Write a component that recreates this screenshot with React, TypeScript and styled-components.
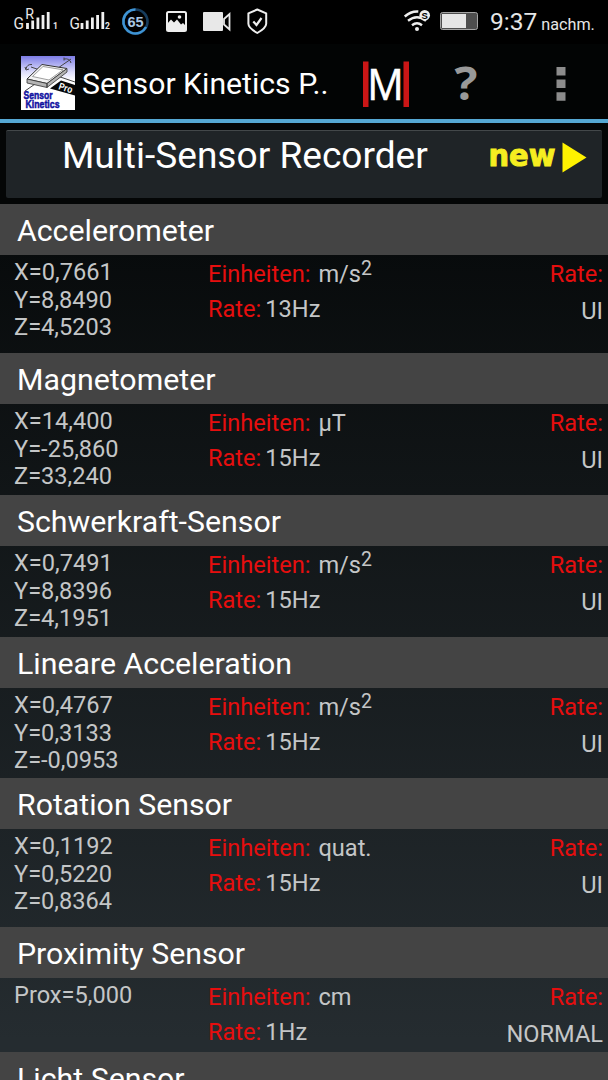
import React from 'react';
import styled, { createGlobalStyle } from 'styled-components';

const GlobalStyle = createGlobalStyle`
  * { box-sizing: border-box; }
  html, body { margin: 0; padding: 0; background: #000; }
  body { font-family: Roboto, "Liberation Sans", sans-serif; overflow: hidden; }
`;

const Screen = styled.div`
  width: 608px;
  height: 1080px;
  overflow: hidden;
  display: flex;
  flex-direction: column;
  background: linear-gradient(180deg, #000 0, #020404 120px, #080b0c 250px, #252c30 1040px);
  color: #fff;
`;

const StatusBar = styled.div`
  height: 44px;
  flex: none;
  display: flex;
  align-items: center;
  background: #000;
`;

const StatusIcons = styled.svg`
  display: block;
  flex: none;
`;

const Clock = styled.div`
  display: flex;
  align-items: baseline;
  margin-left: 10px;
  padding-top: 2px;
  color: #e6e6e6;
  font-size: 24.5px;
  line-height: 44px;
  white-space: nowrap;
`;

const Meridiem = styled.span`
  margin-left: 4px;
  font-size: 16.2px;
`;

const ActionBar = styled.div`
  height: 79px;
  flex: none;
  display: flex;
  align-items: center;
  padding: 2px 0 0 21px;
  background: #020404;
  border-bottom: 4px solid #55a8d3;
`;

const AppTitle = styled.div`
  width: 287px;
  padding: 3px 0 0 7px;
  font-size: 30.2px;
  line-height: 40px;
  white-space: nowrap;
`;

const RecorderFrame = styled.div`
  height: 81px;
  flex: none;
  padding: 7px 6px 6px;
  background: #040606;
`;

const RecorderButton = styled.div`
  height: 68px;
  display: flex;
  align-items: flex-start;
  padding-left: 56px;
  border-top: 1px solid #43484a;
  border-radius: 2px;
  background: #1f2427;
`;

const RecorderLabel = styled.div`
  width: 426px;
  padding-top: 3px;
  font-size: 37.1px;
  line-height: 44px;
  white-space: nowrap;
`;

const SectionHeader = styled.div`
  height: 51px;
  flex: none;
  padding: 2px 0 0 17px;
  background: #444;
  font-size: 30.3px;
  line-height: 50px;
  white-space: nowrap;
`;

const SectionBody = styled.div<{ $height: number }>`
  height: ${(p) => p.$height}px;
  flex: none;
  display: grid;
  grid-template-columns: 194px 1fr auto;
  padding: 4px 5px 0 14px;
  color: #c4c6c7;
  font-size: 23.6px;
  line-height: 27.6px;
  white-space: nowrap;
`;

const Readings = styled.div`
  display: flex;
  flex-direction: column;
`;

const Details = styled.div`
  display: flex;
  flex-direction: column;
  gap: 7.4px;
  padding-top: 2px;
`;

const Detail = styled.div<{ $gap: number }>`
  display: flex;
  gap: ${(p) => p.$gap}px;
  height: 27.6px;
`;

const RateColumn = styled.div`
  display: flex;
  flex-direction: column;
  align-items: flex-end;
  gap: 9px;
  padding-top: 2px;
`;

const Label = styled.span`
  color: #e60e0e;
`;

const Power = styled.sup`
  font-size: 19.5px;
  line-height: 0;
  vertical-align: 7.5px;
`;

type Sensor = {
  name: string;
  height: number;
  readings: string[];
  unit: string;
  squared?: boolean;
  hz: string;
  mode: string;
};

const sensors: Sensor[] = [
  { name: 'Accelerometer', height: 98, readings: ['X=0,7661', 'Y=8,8490', 'Z=4,5203'], unit: 'm/s', squared: true, hz: '13Hz', mode: 'UI' },
  { name: 'Magnetometer', height: 91, readings: ['X=14,400', 'Y=-25,860', 'Z=33,240'], unit: 'µT', hz: '15Hz', mode: 'UI' },
  { name: 'Schwerkraft-Sensor', height: 91, readings: ['X=0,7491', 'Y=8,8396', 'Z=4,1951'], unit: 'm/s', squared: true, hz: '15Hz', mode: 'UI' },
  { name: 'Lineare Acceleration', height: 90, readings: ['X=0,4767', 'Y=0,3133', 'Z=-0,0953'], unit: 'm/s', squared: true, hz: '15Hz', mode: 'UI' },
  { name: 'Rotation Sensor', height: 98, readings: ['X=0,1192', 'Y=0,5220', 'Z=0,8364'], unit: 'quat.', hz: '15Hz', mode: 'UI' },
  { name: 'Proximity Sensor', height: 74, readings: ['Prox=5,000'], unit: 'cm', hz: '1Hz', mode: 'NORMAL' },
];

const LeftStatus = () => (
  <StatusIcons width="404" height="44" viewBox="0 0 404 44" fill="none">
    <g fontFamily="Roboto, sans-serif" fill="#e8e8e8">
      <text x="13.5" y="29" fontSize="16" textLength="10.5" lengthAdjust="spacingAndGlyphs">G</text>
      <text x="25.2" y="19.2" fontSize="14.2">R</text>
      <text x="53" y="29" fontSize="8.5" fontWeight="700">1</text>
      <text x="69.5" y="29" fontSize="16" textLength="10.5" lengthAdjust="spacingAndGlyphs">G</text>
      <text x="105" y="29" fontSize="8.5" fontWeight="700">2</text>
    </g>
    <g stroke="#f0f0f0" strokeWidth="2.8">
      <path d="M27.5 23v6M32.7 20.5V29M37.9 17.5V29M43 15V29M48.2 12V29" />
      <path d="M82 23v6M87.2 20.5V29M92.4 17.5V29M97.6 15V29M102.8 12V29" />
    </g>
    <circle cx="135.5" cy="21.5" r="12" stroke="#173c5c" strokeWidth="2.6" />
    <path d="M135.5 9.500a12 12 0 1 0 10.500 17.500" stroke="#3f94d4" strokeWidth="2.6" />
    <text x="135.5" y="26.500" fontFamily="Liberation Sans, sans-serif" fontWeight="700" fontSize="14.5" textAnchor="middle" fill="#a9c6e2">65</text>
    <rect x="167" y="12" width="19" height="19" rx="1.500" stroke="#eee" strokeWidth="2" />
    <path d="M167 24l4-4.500 3 3 3-3 4 5 2-1.500 3 3v5h-19z" fill="#eee" />
    <circle cx="179.500" cy="17" r="1.800" fill="#eee" />
    <rect x="203" y="12" width="20" height="19" rx="1" fill="#e8e8e8" />
    <path d="M224 19l5.500-5v15.500l-5.500-5z" stroke="#e8e8e8" strokeWidth="1.800" />
    <path d="M257.300 9.500l8.900 3.800v10.500c0 4-5 7-8.900 9.200-3.900-2.200-8.900-5.200-8.900-9.200V13.300z" stroke="#eee" strokeWidth="2" strokeLinejoin="round" />
    <path d="M253.300 21.500l3.200 3.500 5-7" stroke="#eee" strokeWidth="2.200" />
  </StatusIcons>
);

const RightStatus = () => (
  <StatusIcons width="76" height="44" viewBox="404 0 76 44" fill="none">
    <g stroke="#eee" strokeWidth="2.400">
      <path d="M404.800 16.500q6-5.500 13.500-5" />
      <path d="M408 20.800q9-7 18 0" />
      <path d="M412 25.300q5-4 10 0" />
    </g>
    <circle cx="417" cy="29" r="2" fill="#eee" />
    <circle cx="424.700" cy="15.200" r="5.300" fill="#eee" />
    <text x="424.700" y="18.600" fontFamily="Liberation Sans, sans-serif" fontWeight="700" fontSize="9.500" textAnchor="middle" fill="#000">S</text>
    <rect x="440.500" y="12.500" width="37" height="17" rx="2" fill="#4e4e4e" stroke="#a4a4a4" />
    <rect x="442" y="14" width="24" height="14" fill="#e6e6e6" />
  </StatusIcons>
);

const AppLogo = () => (
  <StatusIcons width="54" height="54" viewBox="0 0 54 54">
    <defs>
      <linearGradient id="sky" x1="0" y1="0" x2="0" y2="1">
        <stop offset="0" stopColor="#7d7de6" />
        <stop offset=".3" stopColor="#dedefb" />
        <stop offset=".45" stopColor="#fff" />
      </linearGradient>
    </defs>
    <rect width="54" height="54" fill="url(#sky)" />
    <g fill="none" stroke="#444" strokeWidth="1">
      <path d="M10 11L54 26M4 35L50 3M5 13q1-5 6-4.500M43 3q6-1 7 4M4 11l1 3 3-1M43 1.500v3" />
    </g>
    <path d="M6 23L21 8.500l25 4L26 27.500z" fill="#f4f4f4" stroke="#333" />
    <path d="M11.500 20.500L22 10.500l20 3.300L28 24z" fill="#fff" stroke="#777" strokeWidth=".7" />
    <path d="M6 23l20 4.500v4L6 27zM26 27.500l20-15V16L26 31.500z" fill="#b4b4b4" stroke="#333" strokeWidth=".8" />
    <path d="M29 32.500L40 24.500l14 4.500V39.500z" fill="#080808" />
    <text transform="translate(37 33) rotate(18)" fontFamily="Liberation Sans, sans-serif" fontWeight="700" fontSize="10" textLength="14" lengthAdjust="spacingAndGlyphs" fill="#fff">Pro</text>
    <g fontFamily="Liberation Sans, sans-serif" fontWeight="700" fontSize="10.800" fill="#1010a0" stroke="#1010a0" strokeWidth=".5">
      <text x="2.500" y="42.500" textLength="29" lengthAdjust="spacingAndGlyphs">Sensor</text>
      <text x="4.500" y="51.500" textLength="34" lengthAdjust="spacingAndGlyphs">Kinetics</text>
    </g>
  </StatusIcons>
);

const Actions = () => (
  <StatusIcons width="246" height="76" viewBox="362 44 246 76">
    <path d="M363 60.500h5.500v45.500H363zM403.500 60.500h5.500v45.500h-5.500z" fill="#cb1616" />
    <text x="367.200" y="99.300" fontFamily="Open Sans, sans-serif" fontSize="44.500" textLength="36.500" lengthAdjust="spacingAndGlyphs" fill="#fff" stroke="#fff" strokeWidth=".6">M</text>
    <text x="454.500" y="99" fontFamily="Open Sans, sans-serif" fontWeight="700" fontSize="47" textLength="23" lengthAdjust="spacingAndGlyphs" fill="#999">?</text>
    <path d="M556.500 66h9v8.500h-9zM556.500 78.500h9V87h-9zM556.500 91.200h9v8.500h-9z" fill="#8c8c8c" />
  </StatusIcons>
);

const NewBadge = () => (
  <StatusIcons width="104" height="44" viewBox="488 131 104 44">
    <text x="488.500" y="165.800" fontFamily="DejaVu Sans, sans-serif" fontWeight="700" fontSize="31" textLength="67" lengthAdjust="spacingAndGlyphs" fill="#f6ee20" stroke="#f6ee20" strokeWidth="1">new</text>
    <path d="M562.500 142.500v30l24-15z" fill="#fff200" />
  </StatusIcons>
);

export default function App() {
  return (
    <>
      <GlobalStyle />
      <Screen>
        <StatusBar>
          <LeftStatus />
          <RightStatus />
          <Clock>9:37<Meridiem>nachm.</Meridiem></Clock>
        </StatusBar>
        <ActionBar>
          <AppLogo />
          <AppTitle>Sensor Kinetics P..</AppTitle>
          <Actions />
        </ActionBar>
        <RecorderFrame>
          <RecorderButton>
            <RecorderLabel>Multi-Sensor Recorder</RecorderLabel>
            <NewBadge />
          </RecorderButton>
        </RecorderFrame>
        {sensors.map((s) => (
          <React.Fragment key={s.name}>
            <SectionHeader>{s.name}</SectionHeader>
            <SectionBody $height={s.height}>
              <Readings>
                {s.readings.map((r) => <span key={r}>{r}</span>)}
              </Readings>
              <Details>
                <Detail $gap={8}>
                  <Label>Einheiten:</Label>
                  <span>{s.unit}{s.squared && <Power>2</Power>}</span>
                </Detail>
                <Detail $gap={4}>
                  <Label>Rate:</Label>
                  <span>{s.hz}</span>
                </Detail>
              </Details>
              <RateColumn>
                <Label>Rate:</Label>
                <span>{s.mode}</span>
              </RateColumn>
            </SectionBody>
          </React.Fragment>
        ))}
        <SectionHeader>Licht Sensor</SectionHeader>
      </Screen>
    </>
  );
}
